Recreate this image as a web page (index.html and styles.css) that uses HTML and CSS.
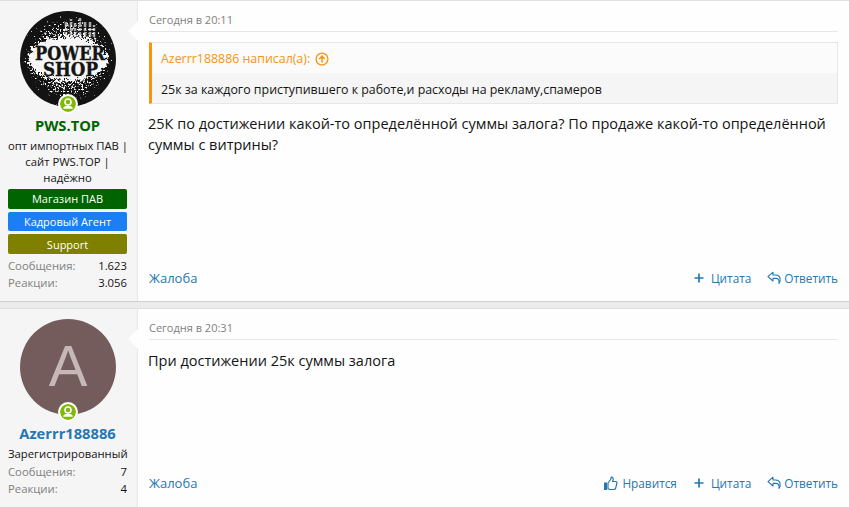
FILE: index.html
```html
<!DOCTYPE html>
<html lang="ru">
<head>
  <meta charset="UTF-8" />
  <title>Сообщения</title>
  <link rel="stylesheet" href="styles.css">
</head>
<body>
  <svg class="defs" width="0" height="0">
    <symbol id="ico-online" viewBox="0 0 16 16">
      <circle cx="8" cy="8" r="8" fill="#7fb900"/>
      <circle cx="8" cy="6" r="3" fill="none" stroke="#fff" stroke-width="1.600"/>
      <path d="M3.200 12.800c0-2 1.500-2.900 3-2.900h3.600c1.500 0 3 .9 3 2.900z" fill="#fff"/>
    </symbol>
    <symbol id="ico-plus" viewBox="0 0 12 12">
      <path d="M6 1.500v9M1.500 6h9" stroke="#2577b1" stroke-width="1.700" fill="none"/>
    </symbol>
    <symbol id="ico-reply" viewBox="0 0 15 14">
      <path d="M6 1.200 1 5.600 6 10V7.400h2.800c2.400 0 3.600 1.400 3.200 5 2-3.300 1.800-8.200-3.200-8.400H6z" fill="none" stroke="#2577b1" stroke-width="1.100" stroke-linejoin="round"/>
    </symbol>
    <symbol id="ico-like" viewBox="0 0 15 15">
      <path d="M1 6.500h3v7.500h-3z" fill="#2577b1"/>
      <path d="M5 7 7.600 3.500c.4-.8.5-1.700.6-2.500 1.600 0 2.200 1.300 1.900 2.700l-.5 1.800h3c1.300 0 1.600 1.100 1.200 2l-1.200 4.800c-.3.900-.9 1.200-1.700 1.200H7c-.9 0-1.400-.3-2-.7z" fill="none" stroke="#2577b1" stroke-width="1.200" stroke-linejoin="round"/>
    </symbol>
  </svg>

  <article class="post">
    <aside class="user">
      <div class="avatar-wrap">
        <svg class="avatar logo" viewBox="0 0 96 96">
          <defs>
            <filter id="grunge" x="-20%" y="-20%" width="140%" height="140%" color-interpolation-filters="sRGB">
              <feTurbulence type="fractalNoise" baseFrequency="0.3" numOctaves="3" seed="4"/>
              <feDisplacementMap in="SourceGraphic" scale="14" xChannelSelector="R" yChannelSelector="G"/>
            </filter>
            <filter id="speckle" x="0" y="0" width="100%" height="100%" color-interpolation-filters="sRGB">
              <feTurbulence type="fractalNoise" baseFrequency="0.55" numOctaves="2" seed="9" result="noise"/>
              <feComposite in="SourceGraphic" in2="noise" operator="arithmetic" k1="0" k2="1" k3="1" k4="-1" result="mix"/>
              <feComponentTransfer in="mix" result="dots">
                <feFuncA type="linear" slope="8" intercept="-2.400"/>
              </feComponentTransfer>
              <feFlood flood-color="#fff"/>
              <feComposite in2="dots" operator="in"/>
            </filter>
            <radialGradient id="burst">
              <stop offset="0" stop-color="#fff" stop-opacity="1"/>
              <stop offset="0.7" stop-color="#fff" stop-opacity="0.750"/>
              <stop offset="1" stop-color="#fff" stop-opacity="0.500"/>
            </radialGradient>
            <clipPath id="round"><circle cx="48" cy="48" r="48"/></clipPath>
          </defs>
          <g clip-path="url(#round)">
            <rect width="96" height="96" fill="#131313"/>
            <g class="skyline">
              <path d="M46 26V10M51 26V8M55 26V12M60 26V7M65 26V10M70 26V11M74 26V14"/>
            </g>
            <rect width="96" height="96" fill="url(#burst)" filter="url(#speckle)"/>
            <ellipse filter="url(#grunge)" cx="48" cy="48" rx="40" ry="22" fill="#f6f6f6"/>
          </g>
          <text class="logo-text" x="50" y="49" textLength="70" lengthAdjust="spacingAndGlyphs">POWER</text>
          <text class="logo-text" x="50.500" y="64.500" textLength="55" lengthAdjust="spacingAndGlyphs">SHOP</text>
        </svg>
        <svg class="online"><use href="#ico-online"/></svg>
      </div>
      <div class="username green">PWS.TOP</div>
      <div class="user-title">опт импортных ПАВ |<br>сайт PWS.TOP |<br>надёжно</div>
      <div class="banner b-green">Магазин ПАВ</div>
      <div class="banner b-blue">Кадровый Агент</div>
      <div class="banner b-olive">Support</div>
      <dl class="stat"><dt>Сообщения:</dt><dd>1.623</dd></dl>
      <dl class="stat"><dt>Реакции:</dt><dd>3.056</dd></dl>
    </aside>
    <div class="main">
      <header class="post-head">Сегодня в 20:11</header>
      <blockquote class="quote">
        <div class="quote-head">Azerrr188886 написал(а):
          <svg class="quote-up" viewBox="0 0 14 14"><circle cx="7" cy="7" r="5.900" fill="none" stroke="#f7950c" stroke-width="1.300"/><path d="M7 10.500V4.500M4.300 7 7 4.200 9.700 7" fill="none" stroke="#f7950c" stroke-width="1.500"/></svg>
        </div>
        <div class="quote-body">25к за каждого приступившего к работе,и расходы на рекламу,спамеров</div>
      </blockquote>
      <div class="message">25К по достижении какой-то определённой суммы залога? По продаже какой-то определённой суммы с витрины?</div>
      <footer class="actions">
        <a class="report">Жалоба</a>
        <a class="act"><svg class="i-plus"><use href="#ico-plus"/></svg>Цитата</a>
        <a class="act"><svg class="i-reply"><use href="#ico-reply"/></svg>Ответить</a>
      </footer>
    </div>
  </article>

  <article class="post second">
    <aside class="user">
      <div class="avatar-wrap">
        <div class="avatar letter">A</div>
        <svg class="online"><use href="#ico-online"/></svg>
      </div>
      <div class="username blue">Azerrr188886</div>
      <div class="user-title">Зарегистрированный</div>
      <dl class="stat"><dt>Сообщения:</dt><dd>7</dd></dl>
      <dl class="stat"><dt>Реакции:</dt><dd>4</dd></dl>
    </aside>
    <div class="main">
      <header class="post-head">Сегодня в 20:31</header>
      <div class="message">При достижении 25к суммы залога</div>
      <footer class="actions">
        <a class="report">Жалоба</a>
        <a class="act"><svg class="i-like"><use href="#ico-like"/></svg>Нравится</a>
        <a class="act"><svg class="i-plus"><use href="#ico-plus"/></svg>Цитата</a>
        <a class="act"><svg class="i-reply"><use href="#ico-reply"/></svg>Ответить</a>
      </footer>
    </div>
  </article>
</body>
</html>
```

FILE: styles.css
```css
html, body {
  height: 100%;
}

body {
  margin: 0;
  font-family: "Open Sans", "Noto Sans", sans-serif;
  font-size: 13px;
  color: #141414;
  background-color: #ebebeb;
  overflow: hidden;
}

.defs {
  position: absolute;
}

.post {
  display: flex;
  height: 300px;
  background-color: #fefefe;
  border-top: 1px solid #e0e0e0;
  border-bottom: 1px solid #cfcfcf;
}

.post.second {
  height: 199px;
  margin-top: 6px;
  border-bottom: none;
}

.user {
  position: relative;
  box-sizing: border-box;
  width: 138px;
  flex-shrink: 0;
  padding: 10px 10px 0 8px;
  background-color: #f5f5f5;
  border-right: 1px solid #e7e7e7;
  text-align: center;
}

.user::after {
  content: "";
  position: absolute;
  top: 20px;
  right: -1px;
  border: 10px solid transparent;
  border-left: none;
  border-right-color: #fefefe;
}

.avatar-wrap {
  position: relative;
  width: 96px;
  height: 96px;
  margin-left: 12px;
}

.avatar {
  display: block;
  width: 96px;
  height: 96px;
}

.letter {
  border-radius: 50%;
  background-color: #755c5c;
  color: #c7b8b8;
  font-family: "Liberation Sans", sans-serif;
  font-size: 58px;
  line-height: 94px;
}

.skyline path {
  fill: none;
  stroke: #a8a8a8;
  stroke-width: 2.500;
  stroke-dasharray: 5 1 3 1;
}

.logo-text {
  font-family: "DejaVu Serif", serif;
  font-weight: bold;
  font-size: 19px;
  fill: #141414;
  stroke: #141414;
  stroke-width: 0.400;
  text-anchor: middle;
}

.online {
  position: absolute;
  left: 38px;
  bottom: -7px;
  width: 16px;
  height: 16px;
  padding: 2px;
  background-color: #fefefe;
  border-radius: 50%;
}

.username {
  margin-top: 9px;
  font-size: 14.700px;
  line-height: 18px;
  font-weight: 700;
}

.green {
  color: #006400;
}

.blue {
  color: #2577b1;
}

.user-title {
  margin-top: 4px;
  font-size: 11.300px;
  line-height: 16px;
  white-space: nowrap;
}

.banner {
  margin-top: 3px;
  height: 20px;
  border-radius: 2px;
  color: #fff;
  font-size: 11px;
  line-height: 20px;
}

.b-green {
  background-color: #006400;
}

.b-blue {
  height: 19px;
  line-height: 19px;
  background-color: #1a7ef5;
}

.b-olive {
  line-height: 21px;
  background-color: #808000;
}

.stat {
  display: flex;
  justify-content: space-between;
  margin: 0;
  font-size: 11.300px;
  line-height: 17px;
}

.banner + .stat {
  margin-top: 3px;
}

.user-title + .stat {
  margin-top: 1px;
}

.stat dt {
  color: #808080;
}

.stat dd {
  margin: 0;
}

.main {
  flex: 1;
  display: flex;
  flex-direction: column;
  padding: 0 11px;
  min-width: 0;
}

.post-head {
  padding: 11px 0 4px;
  border-bottom: 1px solid #e7e7e7;
  color: #808080;
  font-size: 11px;
  line-height: 15px;
}

.quote {
  margin: 10px 0 0;
  border: 1px solid #e7e7e7;
  border-left: 3px solid #f7950c;
}

.quote-head {
  display: flex;
  align-items: center;
  gap: 5px;
  box-sizing: border-box;
  height: 30px;
  padding: 1px 0 0 9px;
  color: #f7950c;
  font-size: 12.400px;
  background-color: #fbfbfb;
}

.quote-up {
  width: 14px;
  height: 14px;
}

.quote-body {
  padding: 8px 9px 4px;
  font-size: 12.400px;
  line-height: 18px;
  background-color: #f5f5f5;
}

.message {
  margin: 9px 0 0 -1px;
  font-size: 14.500px;
  line-height: 21px;
}

.second .message {
  margin-top: 10px;
}

.actions {
  display: flex;
  justify-content: flex-end;
  gap: 16px;
  margin-top: auto;
  margin-bottom: 14px;
  color: #2577b1;
  font-size: 11.800px;
  line-height: 18px;
}

.second .actions {
  margin-bottom: 16px;
}

.report {
  margin-right: auto;
  font-size: 13px;
}

.act {
  display: flex;
  align-items: center;
}

.act svg {
  flex-shrink: 0;
}

.i-plus {
  width: 12px;
  height: 12px;
  margin-right: 6px;
}

.i-reply {
  width: 15px;
  height: 14px;
  margin-right: 2px;
}

.i-like {
  width: 15px;
  height: 15px;
  margin-right: 4px;
}
```
